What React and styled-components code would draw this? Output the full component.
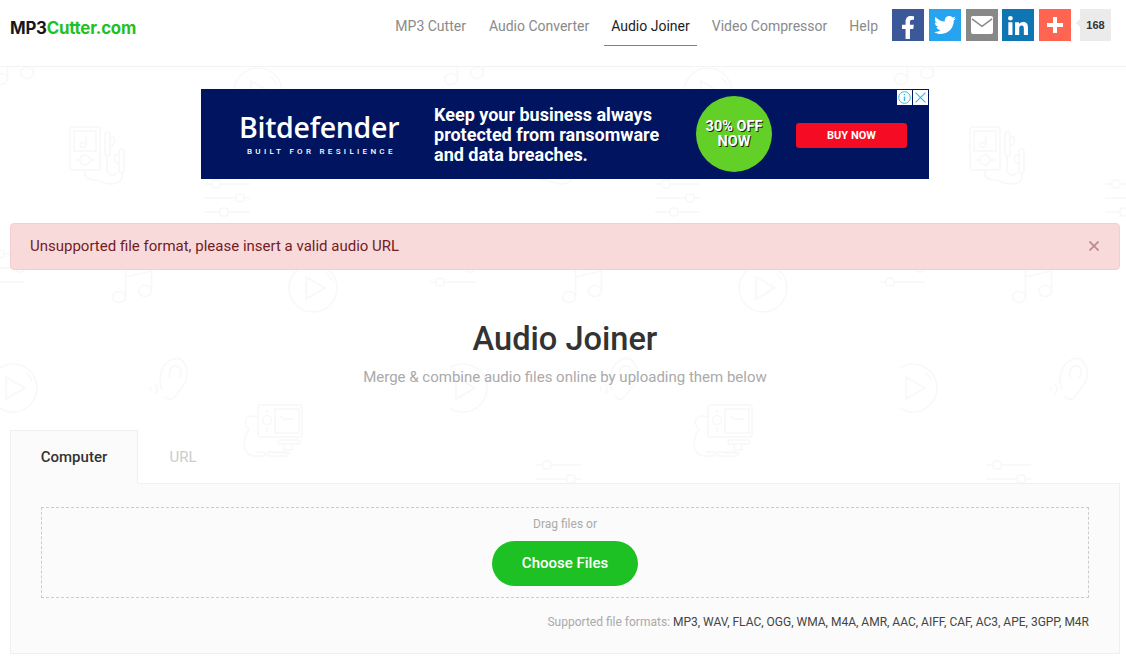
import React from 'react'
import styled, { createGlobalStyle } from 'styled-components'

const GlobalStyle = createGlobalStyle`
  html, body {
    margin: 0;
    padding: 0;
    background: #fff;
    font-family: Roboto, "Liberation Sans", sans-serif;
    color: #333;
  }
  * { box-sizing: border-box; }
`

const Page = styled.div`
  position: relative;
  width: 1126px;
  height: 667px;
  overflow: hidden;
`

const Watermark = styled.svg`
  position: absolute;
  top: 0;
  left: 0;
  fill: none;
  stroke: #f8f8f8;
  stroke-width: 1.6;
`

const Header = styled.header`
  position: relative;
  display: flex;
  justify-content: space-between;
  align-items: flex-start;
  height: 67px;
  padding: 8px 15px 0 10px;
  background: #fff;
  border-bottom: 1px solid #f3f3f3;
`

const Logo = styled.a`
  margin-top: 10px;
  font-family: Inter, sans-serif;
  font-size: 16.8px;
  line-height: 20px;
  font-weight: 700;
  letter-spacing: -0.2px;
  color: #1ec123;
  & b { color: #181818; font-weight: 700; }
`

const HeaderRight = styled.div`
  display: flex;
  align-items: flex-start;
`

const Nav = styled.nav`
  display: flex;
  gap: 8px;
`

const NavItem = styled.a`
  height: 38px;
  padding: 0 7px;
  font-size: 14px;
  line-height: 36px;
  color: ${p => (p.$active ? '#222' : '#8a8a8a')};
  border-bottom: 1px solid ${p => (p.$active ? '#3cb43c' : 'transparent')};
  &:first-child { margin-right: 1px; }
`

const Shares = styled.div`
  display: flex;
  gap: 4.75px;
  margin: 1px 0 0 7px;
`

const Share = styled.a`
  display: flex;
  align-items: center;
  justify-content: center;
  width: 32px;
  height: 32px;
  background: ${p => p.$bg};
`

const Count = styled.span`
  position: relative;
  width: 31px;
  height: 32px;
  margin: 1px 0 0 9px;
  background: #ebebeb;
  font-family: "Liberation Sans", sans-serif;
  font-size: 11px;
  font-weight: 700;
  line-height: 32px;
  text-align: center;
  color: #333;
  &::before {
    content: '';
    position: absolute;
    left: -4px;
    top: 10px;
    border: 4px solid transparent;
    border-left: 0;
    border-right-color: #ebebeb;
  }
`

const Main = styled.main`
  position: relative;
  width: 1110px;
  margin-left: 10px;
`

const Ad = styled.div`
  position: relative;
  display: flex;
  align-items: center;
  width: 728px;
  height: 90px;
  margin: 22px auto 0;
  padding-left: 38px;
  background: #00145f;
  color: #fff;
`

const AdBrand = styled.div`
  width: 195px;
  margin-top: -2px;
  text-align: left;
`

const AdName = styled.div`
  font-family: "Open Sans", sans-serif;
  font-size: 28.5px;
  line-height: 34px;
  font-weight: 600;
  letter-spacing: -0.3px;
`

const AdTag = styled.div`
  margin: 3px 0 0 8px;
  font-size: 8px;
  line-height: 10px;
  font-weight: 500;
  letter-spacing: 3.3px;
  white-space: nowrap;
`

const AdCopy = styled.div`
  width: 262px;
  margin-top: 2px;
  font-size: 18px;
  line-height: 20px;
  font-weight: 700;
`

const AdBadge = styled.div`
  display: flex;
  align-items: center;
  justify-content: center;
  width: 76px;
  height: 76px;
  border-radius: 50%;
  background: #62d026;
  font-size: 14.5px;
  line-height: 15px;
  font-weight: 700;
  text-align: center;
  text-shadow: 1px 1px 0 #222;
`

const AdButton = styled.div`
  width: 111px;
  height: 25px;
  margin: 2px 0 0 24px;
  border-radius: 3px;
  background: #f50b23;
  font-size: 11px;
  line-height: 25px;
  font-weight: 700;
  text-align: center;
`

const AdChoices = styled.div`
  position: absolute;
  top: 1px;
  right: 1px;
  display: flex;
  gap: 1px;
`

const AdChoice = styled.span`
  display: flex;
  align-items: center;
  justify-content: center;
  width: 15px;
  height: 15px;
  background: #fff;
`

const Alert = styled.div`
  display: flex;
  align-items: center;
  justify-content: space-between;
  height: 47px;
  margin-top: 44px;
  padding: 0 20px 2px 19px;
  background: #f8dadb;
  border: 1px solid #f5cdd0;
  border-radius: 4px;
  font-size: 15px;
  color: #721c24;
`

const AlertClose = styled.span`
  display: flex;
`

const Title = styled.h1`
  margin: 47px 0 0;
  font-size: 32.6px;
  line-height: 44px;
  font-weight: 500;
  text-align: center;
  color: #333;
`

const Subtitle = styled.p`
  margin: 5px 0 0;
  font-size: 15px;
  line-height: 22px;
  text-align: center;
  color: #aaa;
`

const Tabs = styled.div`
  display: flex;
  margin-top: 42px;
`

const Tab = styled.a`
  width: ${p => (p.$active ? '128px' : '90px')};
  height: 54px;
  margin-bottom: -1px;
  position: relative;
  z-index: 1;
  font-size: 15px;
  font-weight: ${p => (p.$active ? 500 : 400)};
  line-height: 53px;
  text-align: center;
  color: ${p => (p.$active ? '#333' : '#ccc')};
  background: ${p => (p.$active ? '#fbfbfb' : 'transparent')};
  border: 1px solid ${p => (p.$active ? '#f0f0f0' : 'transparent')};
  border-bottom: 0;
`

const Panel = styled.section`
  height: 171px;
  padding: 23px 30px 0;
  background: #fbfbfb;
  border: 1px solid #f0f0f0;
`

const Drop = styled.div`
  display: flex;
  flex-direction: column;
  align-items: center;
  height: 91px;
  padding-top: 10px;
  border: 1px dashed #ccc;
`

const DropHint = styled.span`
  font-size: 12px;
  line-height: 13px;
  color: #aaa;
`

const ChooseButton = styled.button`
  width: 146px;
  height: 45px;
  margin-top: 10px;
  padding: 0 0 2px;
  border: 0;
  border-radius: 23px;
  background: #1ec123;
  color: #fff;
  font-family: inherit;
  font-size: 15px;
  font-weight: 500;
`

const Formats = styled.p`
  margin: 16px 0 0;
  font-size: 12px;
  line-height: 16px;
  text-align: right;
  color: #aaa;
  & span { color: #444; }
`

const Slider = ({ x, y, knobs, gap = 14 }) => (
  <g transform={`translate(${x} ${y})`}>
    {knobs.map((k, i) => (
      <g key={i}>
        <path d={`M0 ${i * gap}H${k - 4}M${k + 4} ${i * gap}H45`} />
        <rect x={k - 4} y={i * gap - 4} width="8" height="8" rx="3" />
      </g>
    ))}
  </g>
)

const Note = ({ x, y }) => (
  <g transform={`translate(${x} ${y})`}>
    <ellipse cx="7" cy="35" rx="6.5" ry="5.5" />
    <ellipse cx="33" cy="29" rx="6.5" ry="5.5" />
    <path d="M13.5 35V7L39.5 1V29M13.5 15L39.5 9" />
  </g>
)

const Play = ({ cx, cy }) => (
  <g transform={`translate(${cx} ${cy})`}>
    <circle r="24" />
    <path d="M-7 -11L12 0L-7 11Z" />
    <path d="M13 -15A20 20 0 0 1 19 -7" />
  </g>
)

const Ear = ({ x, y }) => (
  <g transform={`translate(${x} ${y})`}>
    <path d="M17 32C13 22 15 6 28 1C38 -2 43 8 42 18C41 28 35 30 32 36C29 42 22 43 20 38" />
    <path d="M25 20C23 12 27 7 32 8C37 9 37 16 34 20" />
    <path d="M10 26A7 7 0 0 1 10 36M5 29A3 3 0 0 1 5 33" />
  </g>
)

const Player = ({ x, y }) => (
  <g transform={`translate(${x} ${y})`}>
    <rect x="0" y="0" width="30" height="43" rx="2" />
    <rect x="4" y="4" width="22" height="20" />
    <circle cx="15" cy="33" r="5" />
    <path d="M5 33H9M21 33H25M16 8V18" />
    <ellipse cx="13" cy="18" rx="3" ry="2.5" />
    <rect x="35" y="5" width="5" height="24" rx="2.5" />
    <rect x="49" y="22" width="5" height="24" rx="2.5" />
    <path d="M40 10H43C45 10 45 16 43 18H40M49 28H46C44 28 44 34 46 36H49" />
    <path d="M37 29V42C37 48 44 50 47 46M52 46V50C52 58 38 58 32 55C26 52 16 54 15 48V43" />
  </g>
)

const Deck = ({ x, y }) => (
  <g transform={`translate(${x} ${y})`}>
    <rect x="0" y="0" width="44" height="32" rx="2" />
    <rect x="17" y="4" width="24" height="24" />
    <circle cx="9" cy="15" r="4.5" />
    <path d="M9 4V8M9 22V27M22 11L26 14H36" />
    <path d="M0 12C-13 8 -16 18 -9 24C-16 34 -16 50 -4 51H5C9 51 8 47 5 47H-2" />
    <path d="M20 39H40M26 39V45H34V39M16 48H32" />
    <rect x="20" y="35" width="22" height="4" rx="2" />
    <rect x="10" y="47" width="20" height="4" rx="2" />
  </g>
)

const WatermarkTile = () => (
  <>
    <Note x={-6} y={44} />
    <Note x={444} y={44} />
    <Play cx={258} cy={92} />
    <Player x={70} y={127} />
    <Slider x={205} y={184} knobs={[11, 35, 19]} />
    <Slider x={430} y={254} knobs={[20, 40, 10]} />
    <Slider x={-20} y={254} knobs={[20, 40, 10]} />
    <Note x={112} y={262} />
    <Play cx={313} cy={288} />
    <Play cx={13} cy={388} />
    <Ear x={145} y={358} />
    <Deck x={258} y={405} />
    <Slider x={86} y={465} knobs={[11, 35, 19]} />
  </>
)

const MailIcon = () => (
  <svg width="22" height="18" viewBox="0 0 24 19" preserveAspectRatio="none">
    <rect width="24" height="19" rx="2" fill="#fff" />
    <path d="M1 3L12 11L23 3" fill="none" stroke="#888" strokeWidth="1.6" />
  </svg>
)

const FacebookIcon = () => (
  <svg width="14" height="23" viewBox="0 0 320 512" preserveAspectRatio="none" style={{ marginTop: 5 }}>
    <path fill="#fff" d="M279.14 288l14.22-92.66h-88.91v-60.13c0-25.35 12.42-50.06 52.24-50.06h40.42V6.26S260.43 0 225.36 0c-73.22 0-121.08 44.38-121.08 124.72v70.62H22.89V288h81.39v224h100.17V288z" />
  </svg>
)

const TwitterIcon = () => (
  <svg width="22" height="22" viewBox="0 0 512 512">
    <path fill="#fff" d="M459.37 151.72c.33 4.55.33 9.1.33 13.65 0 138.72-105.58 298.56-298.56 298.56-59.45 0-114.68-17.22-161.14-47.11 8.45.97 16.57 1.3 25.34 1.3 49.06 0 94.21-16.57 130.27-44.83-46.13-.97-84.79-31.19-98.11-72.77 6.5.97 12.99 1.62 19.82 1.62 9.42 0 18.84-1.3 27.61-3.57-48.08-9.75-84.14-51.98-84.14-102.98v-1.3c13.97 7.8 30.21 12.67 47.43 13.32-28.26-18.84-46.78-51.01-46.78-87.39 0-19.49 5.2-37.36 14.29-52.95 51.65 63.67 129.29 105.26 216.37 109.81-1.62-7.8-2.6-15.92-2.6-24.04 0-57.83 46.78-104.93 104.93-104.93 30.21 0 57.5 12.67 76.67 33.14 23.72-4.55 46.46-13.32 66.6-25.34-7.8 24.04-24.37 44.18-46.13 57.18 21.12-2.27 41.58-8.12 60.43-16.24-14.29 20.79-32.16 39.31-52.63 54.25z" />
  </svg>
)

const LinkedinIcon = () => (
  <svg width="20" height="19" viewBox="0 0 448 448" preserveAspectRatio="none">
    <path fill="#fff" d="M100.28 448H7.4V148.9h92.88zM53.79 108.1C24.09 108.1 0 83.5 0 53.8a53.79 53.79 0 0 1 107.58 0c0 29.7-24.1 54.3-53.79 54.3zM447.9 448h-92.68V302.4c0-34.7-.7-79.2-48.29-79.2-48.29 0-55.69 37.7-55.69 76.7V448h-92.78V148.9h89.08v40.8h1.3c12.4-23.5 42.69-48.3 87.88-48.3 94 0 111.28 61.9 111.28 142.3V448z" />
  </svg>
)

const PlusIcon = () => (
  <svg width="16" height="16" viewBox="0 0 16 16">
    <path fill="#fff" d="M6 0H10V6H16V10H10V16H6V10H0V6H6Z" />
  </svg>
)

const InfoIcon = () => (
  <svg width="13" height="13" viewBox="0 0 13 13" fill="none" stroke="#3bb9dc" strokeWidth="1">
    <circle cx="6.5" cy="6.5" r="5.8" />
    <path d="M6.5 5.5V10M6.5 3V4.2" strokeWidth="1.4" />
  </svg>
)

const CloseIcon = ({ size, color, width }) => (
  <svg width={size} height={size} viewBox="0 0 10 10" fill="none" stroke={color} strokeWidth={width}>
    <path d="M0.5 0.5L9.5 9.5M9.5 0.5L0.5 9.5" />
  </svg>
)

export default function App() {
  return (
    <Page>
      <GlobalStyle />
      <Watermark width="1126" height="667">
        <defs>
          <pattern id="tile" width="450" height="667" patternUnits="userSpaceOnUse">
            <WatermarkTile />
          </pattern>
        </defs>
        <rect width="1126" height="667" fill="url(#tile)" stroke="none" />
      </Watermark>

      <Header>
        <Logo><b>MP3</b>Cutter.com</Logo>
        <HeaderRight>
          <Nav>
            <NavItem>MP3 Cutter</NavItem>
            <NavItem>Audio Converter</NavItem>
            <NavItem $active>Audio Joiner</NavItem>
            <NavItem>Video Compressor</NavItem>
            <NavItem>Help</NavItem>
          </Nav>
          <Shares>
            <Share $bg="#3b5998"><FacebookIcon /></Share>
            <Share $bg="#26a4f0"><TwitterIcon /></Share>
            <Share $bg="#888888"><MailIcon /></Share>
            <Share $bg="#0f76b4"><LinkedinIcon /></Share>
            <Share $bg="#ff6550"><PlusIcon /></Share>
          </Shares>
          <Count>168</Count>
        </HeaderRight>
      </Header>

      <Main>
        <Ad>
          <AdBrand>
            <AdName>Bitdefender</AdName>
            <AdTag>BUILT FOR RESILIENCE</AdTag>
          </AdBrand>
          <AdCopy>
            Keep your business always<br />
            protected from ransomware<br />
            and data breaches.
          </AdCopy>
          <AdBadge>30% OFF<br />NOW</AdBadge>
          <AdButton>BUY NOW</AdButton>
          <AdChoices>
            <AdChoice><InfoIcon /></AdChoice>
            <AdChoice><CloseIcon size={11} color="#3bb9dc" width={1} /></AdChoice>
          </AdChoices>
        </Ad>

        <Alert>
          Unsupported file format, please insert a valid audio URL
          <AlertClose><CloseIcon size={10} color="#bb8a8e" width={1.7} /></AlertClose>
        </Alert>

        <Title>Audio Joiner</Title>
        <Subtitle>Merge &amp; combine audio files online by uploading them below</Subtitle>

        <Tabs>
          <Tab $active>Computer</Tab>
          <Tab>URL</Tab>
        </Tabs>
        <Panel>
          <Drop>
            <DropHint>Drag files or</DropHint>
            <ChooseButton>Choose Files</ChooseButton>
          </Drop>
          <Formats>
            Supported file formats: <span>MP3, WAV, FLAC, OGG, WMA, M4A, AMR, AAC, AIFF, CAF, AC3, APE, 3GPP, M4R</span>
          </Formats>
        </Panel>
      </Main>
    </Page>
  )
}
